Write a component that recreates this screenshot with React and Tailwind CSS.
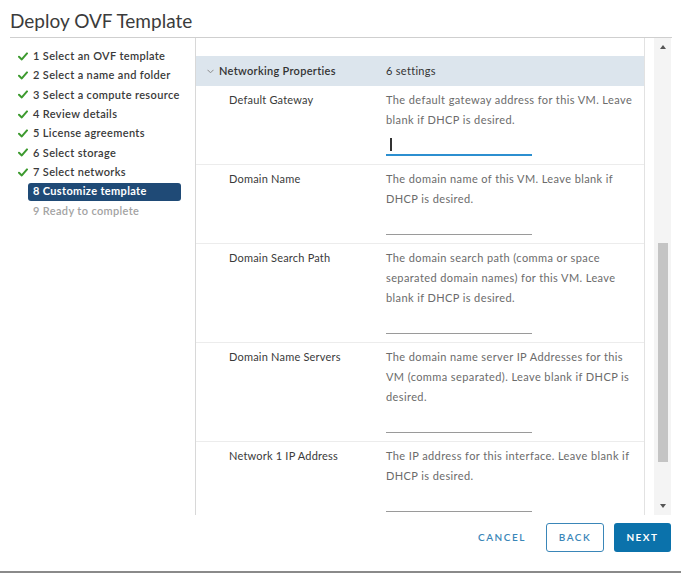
import React from "react";

const steps = [
  { n: 1, label: "Select an OVF template", done: true },
  { n: 2, label: "Select a name and folder", done: true },
  { n: 3, label: "Select a compute resource", done: true },
  { n: 4, label: "Review details", done: true },
  { n: 5, label: "License agreements", done: true },
  { n: 6, label: "Select storage", done: true },
  { n: 7, label: "Select networks", done: true },
  { n: 8, label: "Customize template", active: true },
  { n: 9, label: "Ready to complete", pending: true },
];

const rows = [
  {
    label: "Default Gateway",
    lines: ["The default gateway address for this VM. Leave", "blank if DHCP is desired."],
    focused: true,
  },
  {
    label: "Domain Name",
    lines: ["The domain name of this VM. Leave blank if", "DHCP is desired."],
  },
  {
    label: "Domain Search Path",
    lines: [
      "The domain search path (comma or space",
      "separated domain names) for this VM. Leave",
      "blank if DHCP is desired.",
    ],
  },
  {
    label: "Domain Name Servers",
    lines: [
      "The domain name server IP Addresses for this",
      "VM (comma separated). Leave blank if DHCP is",
      "desired.",
    ],
  },
  {
    label: "Network 1 IP Address",
    lines: ["The IP address for this interface. Leave blank if", "DHCP is desired."],
  },
];

const Check = () => (
  <svg width="10" height="9" viewBox="0 0 10 9" className="shrink-0">
    <path d="M1 4.8 L3.8 7.4 L9 1.4" fill="none" stroke="#3d9a2f" strokeWidth="2" strokeLinecap="round" strokeLinejoin="round" />
  </svg>
);

const StepItem = ({ step }) => (
  <div className="flex items-center h-[18px] pl-[8px]">
    <div className="w-[10px] flex items-center">{step.done && <Check />}</div>
    <div
      className={
        "w-[153px] h-[18px] flex items-center px-[5px] rounded-[3px] tracking-[0.35px] whitespace-nowrap " +
        (step.active ? "bg-[#1f4a76] text-white font-bold" : step.pending ? "text-[#a3a3a3] font-semibold" : "text-[#3a3a3a] font-semibold")
      }
    >
      {step.n} {step.label}
    </div>
  </div>
);

const SettingRow = ({ row }) => (
  <div className="flex border-b border-[#ececec] pt-[4px] pb-[8px]">
    <div className="w-[190px] shrink-0 pl-[33px] leading-[20px] text-[#3a3a3a] tracking-[0.2px]">{row.label}</div>
    <div className="flex flex-col">
      <div className="leading-[20px] text-[#6b6b6b] tracking-[0.4px]">
        {row.lines.map((l, i) => (
          <div key={i} className="whitespace-nowrap">{l}</div>
        ))}
      </div>
      <div
        className={
          "mt-[2px] h-[24px] w-[146px] flex items-end pb-[3px] pl-[4px] " +
          (row.focused ? "border-b-2 border-[#2c8fd0]" : "border-b border-[#9a9a9a]")
        }
      >
        {row.focused && <div className="w-[1.5px] h-[13px] bg-[#333]" />}
      </div>
    </div>
  </div>
);

export default function App() {
  return (
    <div
      className="w-[681px] h-[573px] bg-white flex flex-col text-[11px] border-b-2 border-[#8a8a8a]"
      style={{ fontFamily: "Lato, 'Open Sans', sans-serif" }}
    >
      <div className="h-[37px] pl-[10px] pt-[8px] text-[19px] leading-[25px] text-[#3b3b3b]">Deploy OVF Template</div>

      <div className="flex-1 flex ml-[10px] mr-[9px] border-t border-[#cfcfcf] min-h-0">
        <div className="w-[186px] shrink-0 border-r border-[#d8d8d8] pt-[9px] flex flex-col gap-[1.4px]">
          {steps.map((s) => (
            <StepItem key={s.n} step={s} />
          ))}
        </div>

        <div className="flex-1 flex min-w-0">
          <div className="w-[449px] border-r border-[#e2e2e2] overflow-hidden flex flex-col">
            <div className="h-[18px] shrink-0" />
            <div className="h-[30px] shrink-0 bg-[#dce5ed] flex items-center">
              <div className="w-[23px] flex justify-end pr-[5px]">
                <svg width="7" height="5" viewBox="0 0 7 5">
                  <path d="M0.5 0.8 L3.5 3.8 L6.5 0.8" fill="none" stroke="#8a8a8a" strokeWidth="1" />
                </svg>
              </div>
              <div className="w-[167px] font-semibold text-[#333] tracking-[0.3px]">Networking Properties</div>
              <div className="text-[#333] tracking-[0.3px]">6 settings</div>
            </div>
            {rows.map((r) => (
              <SettingRow key={r.label} row={r} />
            ))}
          </div>
          <div className="w-[9px]" />
          <div className="w-[17px] bg-[#f4f4f4] flex flex-col items-center">
            <div className="h-[18px] flex items-center justify-center">
              <svg width="6" height="4" viewBox="0 0 6 4">
                <path d="M0 4 L3 0 L6 4 Z" fill="#555" />
              </svg>
            </div>
            <div className="h-[187px]" />
            <div className="w-[10px] h-[219px] bg-[#c4c4c4]" />
            <div className="flex-1" />
            <div className="h-[18px] flex items-center justify-center">
              <svg width="6" height="4" viewBox="0 0 6 4">
                <path d="M0 0 L6 0 L3 4 Z" fill="#555" />
              </svg>
            </div>
          </div>
        </div>
      </div>

      <div className="h-[56px] shrink-0 flex items-start justify-end pt-[8px] pr-[10px]">
        <button className="h-[29px] w-[58px] text-[10px] font-semibold tracking-[1.5px] text-[#3a86b8]">CANCEL</button>
        <button className="ml-[15px] h-[29px] w-[58px] rounded-[3px] border border-[#3a86b8] text-[10px] font-semibold tracking-[1.5px] text-[#3a86b8]">
          BACK
        </button>
        <button className="ml-[10px] h-[29px] w-[57px] rounded-[3px] bg-[#0b72ab] text-[10px] font-bold tracking-[1.5px] text-white">
          NEXT
        </button>
      </div>
    </div>
  );
}
